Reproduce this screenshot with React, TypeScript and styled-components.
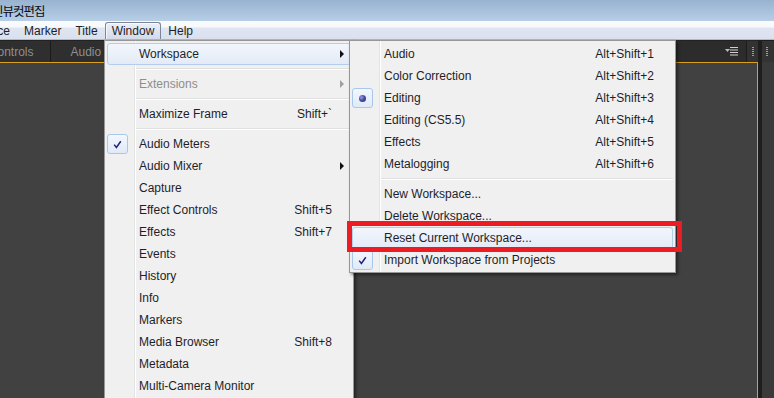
import styled, { createGlobalStyle } from "styled-components";

const GlobalStyle = createGlobalStyle`
  html, body {
    margin: 0;
    padding: 0;
  }
  body {
    width: 774px;
    height: 398px;
    overflow: hidden;
    font-family: "Liberation Sans", Arial, sans-serif;
    font-size: 12px;
  }
`;

type Mark = "check" | "radio";

interface MenuEntry {
  label?: string;
  shortcut?: string;
  sub?: boolean;
  hot?: boolean;
  disabled?: boolean;
  mark?: Mark;
  sep?: boolean;
}

const windowMenu: MenuEntry[] = [
  { label: "Workspace", sub: true, hot: true },
  { sep: true },
  { label: "Extensions", sub: true, disabled: true },
  { sep: true },
  { label: "Maximize Frame", shortcut: "Shift+`" },
  { sep: true },
  { label: "Audio Meters", mark: "check" },
  { label: "Audio Mixer", sub: true },
  { label: "Capture" },
  { label: "Effect Controls", shortcut: "Shift+5" },
  { label: "Effects", shortcut: "Shift+7" },
  { label: "Events" },
  { label: "History" },
  { label: "Info" },
  { label: "Markers" },
  { label: "Media Browser", shortcut: "Shift+8" },
  { label: "Metadata" },
  { label: "Multi-Camera Monitor" },
];

const workspaceMenu: MenuEntry[] = [
  { label: "Audio", shortcut: "Alt+Shift+1" },
  { label: "Color Correction", shortcut: "Alt+Shift+2" },
  { label: "Editing", shortcut: "Alt+Shift+3", mark: "radio" },
  { label: "Editing (CS5.5)", shortcut: "Alt+Shift+4" },
  { label: "Effects", shortcut: "Alt+Shift+5" },
  { label: "Metalogging", shortcut: "Alt+Shift+6" },
  { sep: true },
  { label: "New Workspace..." },
  { label: "Delete Workspace..." },
  { label: "Reset Current Workspace...", hot: true },
  { label: "Import Workspace from Projects", mark: "check" },
];

const MenuList = ({ items }: { items: MenuEntry[] }) => (
  <>
    {items.map((it, i) =>
      it.sep ? (
        <Separator key={i} />
      ) : (
        <MenuRow key={i} $hot={it.hot} $disabled={it.disabled}>
          <IconCell>
            {it.mark && (
              <MarkBox>
                {it.mark === "check" ? (
                  <svg width="9" height="9" viewBox="0 0 9 9">
                    <path
                      d="M1.2 4.6 L3.4 7.4 L7.8 1.2"
                      fill="none"
                      stroke="#23237a"
                      strokeWidth="1.5"
                    />
                  </svg>
                ) : (
                  <Ball />
                )}
              </MarkBox>
            )}
          </IconCell>
          <Label>{it.label}</Label>
          <Shortcut>{it.shortcut}</Shortcut>
          <ArrowCell>{it.sub && <SubArrow $disabled={it.disabled} />}</ArrowCell>
        </MenuRow>
      )
    )}
  </>
);

const App = () => {
  return (
    <Screen>
      <GlobalStyle />
      <TitleBar>
        <TitleText>인뷰컷편집</TitleText>
      </TitleBar>
      <MenuBar>
        <MenuBarItem>Sequence</MenuBarItem>
        <MenuBarItem>Marker</MenuBarItem>
        <MenuBarItem>Title</MenuBarItem>
        <MenuBarItem $active>Window</MenuBarItem>
        <MenuBarItem>Help</MenuBarItem>
      </MenuBar>
      <Workspace>
        <MainFrame>
          <TabRow>
            <Tab $first>Effect Controls</Tab>
            <Tab>Audio Meters</Tab>
            <TabFill>
              <svg width="13" height="9" viewBox="0 0 13 9">
                <path d="M0 2 H5 L2.5 5 Z" fill="#bdbdbd" />
                <rect x="5" y="0" width="8" height="1" fill="#d0d0d0" />
                <rect x="5" y="2.5" width="8" height="1" fill="#d0d0d0" />
                <rect x="5" y="5" width="8" height="1" fill="#d0d0d0" />
                <rect x="5" y="7.5" width="8" height="1" fill="#d0d0d0" />
              </svg>
            </TabFill>
            <GripCell>
              <Grip />
            </GripCell>
          </TabRow>
          <PanelBody />
        </MainFrame>
        <SideFrame>
          <SideHeader>
            <Grip />
          </SideHeader>
          <SideBody />
        </SideFrame>
      </Workspace>

      <WindowMenu>
        <MenuList items={windowMenu} />
      </WindowMenu>
      <WorkspaceMenu>
        <MenuList items={workspaceMenu} />
      </WorkspaceMenu>
      <Callout />
    </Screen>
  );
};

export default App;

const Screen = styled.div`
  position: relative;
  width: 774px;
  height: 398px;
  overflow: hidden;
  display: flex;
  flex-direction: column;
  background: #1e1e1e;
`;

const TitleBar = styled.div`
  height: 21px;
  flex: none;
  overflow: hidden;
  display: flex;
  align-items: center;
  background: linear-gradient(#98b3d0, #b7cee6);
`;

const TitleText = styled.span`
  margin-left: -8px;
  font-family: "Noto Sans CJK KR", sans-serif;
  font-size: 12.5px;
  letter-spacing: -1px;
  color: #0a0a14;
  white-space: nowrap;
`;

const MenuBar = styled.div`
  height: 18px;
  flex: none;
  display: flex;
  align-items: flex-end;
  margin-left: -51px;
  border-bottom: 1px solid #b4b8c4;
  background: linear-gradient(
    #fafbfd 0,
    #f6f8fb 6px,
    #dfe5f1 7px,
    #dae0ee 100%
  );
`;

const MenuBarItem = styled.div<{ $active?: boolean }>`
  height: 16px;
  display: flex;
  align-items: center;
  padding: 0 6px;
  border: 1px solid ${(p) => (p.$active ? "#7c8698" : "transparent")};
  border-bottom: none;
  border-radius: 3px 3px 0 0;
  color: #1e1e28;
  white-space: nowrap;
  background: ${(p) =>
    p.$active ? "linear-gradient(#eceff6, #d3dae9)" : "transparent"};
  box-shadow: ${(p) =>
    p.$active ? "inset 1px 1px 0 rgba(255,255,255,0.7)" : "none"};
`;

const Workspace = styled.div`
  flex: 1;
  display: flex;
  background: #1e1e1e;
`;

const MainFrame = styled.div`
  width: 758px;
  flex: none;
  display: flex;
  flex-direction: column;
`;

const TabRow = styled.div`
  height: 21px;
  flex: none;
  display: flex;
  padding-top: 1px;
  background: #222;
`;

const Tab = styled.div<{ $first?: boolean }>`
  display: flex;
  align-items: center;
  padding: 0 17px 0 19px;
  margin-left: ${(p) => (p.$first ? "-64px" : "0")};
  border-right: 1px solid #1a1a1a;
  background: #2f2f2f;
  color: #8e8e8e;
  white-space: nowrap;
`;

const TabFill = styled.div`
  flex: 1;
  display: flex;
  align-items: center;
  justify-content: flex-end;
  padding-right: 8px;
  background: #2c2c2c;
  border-right: 1px solid #1c1c1c;
`;

const GripCell = styled.div`
  width: 11px;
  display: flex;
  align-items: center;
  justify-content: center;
  background: #323232;
`;

const Grip = styled.div`
  width: 2px;
  height: 10px;
  background: repeating-linear-gradient(
    to bottom,
    #9c9c9c 0,
    #9c9c9c 1px,
    transparent 1px,
    transparent 2px
  );
`;

const PanelBody = styled.div`
  flex: 1;
  background: #414141;
  border-top: 1px solid #dca021;
  border-right: 1px solid #dca021;
`;

const SideFrame = styled.div`
  flex: 1;
  margin-left: 4px;
  display: flex;
  flex-direction: column;
`;

const SideHeader = styled.div`
  height: 21px;
  margin-top: 1px;
  display: flex;
  align-items: center;
  padding-left: 4px;
  background: #333;
`;

const SideBody = styled.div`
  flex: 1;
  background: #3a3a3a;
`;

const MenuBase = styled.div`
  position: absolute;
  top: 40px;
  box-sizing: border-box;
  padding: 2px 2px 1px;
  border: 1px solid #979797;
  background: linear-gradient(
    to right,
    #f0f0f0 29px,
    #e2e3e3 29px,
    #e2e3e3 30px,
    #ffffff 30px,
    #ffffff 31px,
    #f0f0f0 31px
  );
  box-shadow: 2px 2px 3px rgba(0, 0, 0, 0.45);
`;

const WindowMenu = styled(MenuBase)`
  left: 104px;
  width: 250px;
  height: 380px;
`;

const WorkspaceMenu = styled(MenuBase)`
  left: 349px;
  width: 327px;
`;

const MenuRow = styled.div<{ $hot?: boolean; $disabled?: boolean }>`
  height: 22px;
  box-sizing: border-box;
  display: grid;
  grid-template-columns: 22px 1fr auto 18px;
  align-items: center;
  color: ${(p) => (p.$disabled ? "#8d8d8d" : "#1e1e2a")};
  border: 1px solid ${(p) => (p.$hot ? "#b3cdec" : "transparent")};
  border-radius: 3px;
  background: ${(p) =>
    p.$hot ? "linear-gradient(#f2f6fc, #e3ebf7)" : "transparent"};
  white-space: nowrap;
`;

const IconCell = styled.div`
  display: flex;
  height: 20px;
`;

const MarkBox = styled.div`
  width: 21px;
  height: 20px;
  margin-left: -1px;
  box-sizing: border-box;
  display: flex;
  align-items: center;
  justify-content: center;
  border: 1px solid #a9c7ec;
  border-radius: 3px;
  background: linear-gradient(#f3f7fd, #e0eaf7);
`;

const Ball = styled.div`
  width: 7px;
  height: 7px;
  border-radius: 50%;
  background: radial-gradient(circle at 35% 35%, #9a9ee0 0, #4a4ea8 45%, #23256a 100%);
`;

const Label = styled.span`
  padding-left: 9px;
`;

const Shortcut = styled.span`
  text-align: right;
`;

const ArrowCell = styled.div`
  display: flex;
  justify-content: center;
`;

const SubArrow = styled.div<{ $disabled?: boolean }>`
  width: 0;
  height: 0;
  margin-left: 1px;
  border-top: 4px solid transparent;
  border-bottom: 4px solid transparent;
  border-left: 4px solid ${(p) => (p.$disabled ? "#a0a0a0" : "#111")};
`;

const Separator = styled.div`
  height: 8px;
  margin-left: 29px;
  display: flex;
  flex-direction: column;
  justify-content: center;

  &::before {
    content: "";
    height: 1px;
    background: #e0e0e0;
  }
  &::after {
    content: "";
    height: 1px;
    background: #ffffff;
  }
`;

const Callout = styled.div`
  position: absolute;
  left: 347px;
  top: 221px;
  width: 335px;
  height: 31px;
  box-sizing: border-box;
  border: 5px solid #ec1c24;
`;
